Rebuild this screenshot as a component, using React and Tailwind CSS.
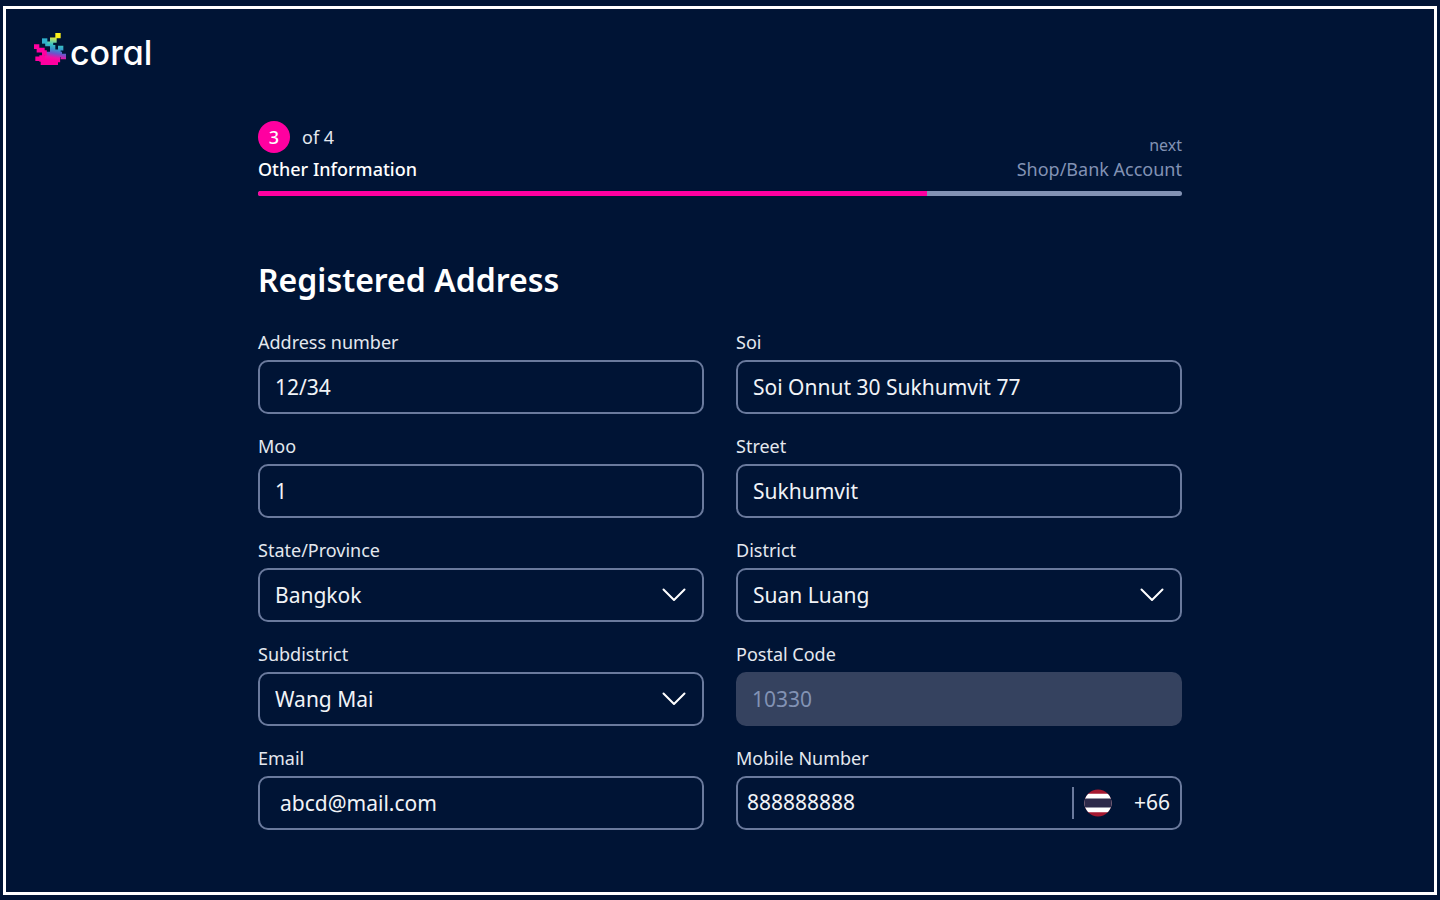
import { useState } from 'react';

const inputClass =
  'h-[54px] w-full rounded-[10px] border-2 border-[#6a7a9d] bg-transparent text-[21px] text-[#f1f3f7] outline-none focus:border-white';

function Logo() {
  return (
    <a href="#" className="inline-flex items-center gap-1 text-white">
      <svg className="h-8 w-8" viewBox="0 0 12 12">
        <defs>
          <linearGradient id="reef" gradientUnits="userSpaceOnUse" x1="8" y1="0" x2="6" y2="12">
            <stop offset="0.12" stopColor="#fdf018" />
            <stop offset="0.24" stopColor="#8fd88a" />
            <stop offset="0.36" stopColor="#38c2c4" />
            <stop offset="0.5" stopColor="#3592cc" />
            <stop offset="0.62" stopColor="#6a55cc" />
            <stop offset="0.76" stopColor="#f010a6" />
            <stop offset="0.85" stopColor="#ff00a0" />
          </linearGradient>
        </defs>
        {/* branches, top to bottom */}
        <path
          fill="url(#reef)"
          d="M8 0h2v2h-2zM6 1.700h2.500v2h-2.500zM4.200 3.200h3v1.800h-3zM6 4.500h2v3h-2zM9 4.800h2v1.800h-2zM7 6.200h3v2h-3zM4 7h6.500v2h-6.500zM10 7.800h2v2h-2zM3 8.500h6.800v2.500h-6.800zM2.500 10.200h6.500v1.800h-6.500z"
        />
        <path fill="#2fb0cc" d="M3 2h2v2h-2z" />
        <path fill="#ff00a0" d="M0 4.200h2v1.800h-2zM1 5.500h3v1.800h-3zM3 6.500h1.800v2h-1.800zM0.500 8.800h2v1.700h-2zM2 8.300h2v2.500h-2z" />
      </svg>
      <span className="pt-2 font-['Inter',sans-serif] text-[34px] leading-8 font-medium [font-feature-settings:'cv11']">
        coral
      </span>
    </a>
  );
}

function Field({ id, label, children }) {
  return (
    <div>
      <label htmlFor={id} className="block pb-1 text-lg leading-7 text-[#e4e8ef]">
        {label}
      </label>
      {children}
    </div>
  );
}

function TextField({ id, label, value, pad = 'px-[15px]', ...rest }) {
  const [text, setText] = useState(value);
  return (
    <Field id={id} label={label}>
      <input id={id} value={text} onChange={(e) => setText(e.target.value)} className={`${inputClass} ${pad}`} {...rest} />
    </Field>
  );
}

function SelectField({ id, label, options }) {
  return (
    <Field id={id} label={label}>
      <div className="relative">
        <select id={id} className={`${inputClass} appearance-none px-[15px] pt-0.5`}>
          {options.map((option) => (
            <option key={option} className="bg-[#001435]">{option}</option>
          ))}
        </select>
        <svg className="pointer-events-none absolute top-5 right-[18px] h-[14px] w-6" fill="none" stroke="white" viewBox="0 0 24 14">
          <path strokeLinecap="round" strokeLinejoin="round" strokeWidth={2} d="M1.5 1.5L12 12L22.5 1.5" />
        </svg>
      </div>
    </Field>
  );
}

export default function App() {
  return (
    <div className="flex min-h-screen bg-[#001435] px-[3px] pt-1.5 pb-[5px] font-['Noto_Sans',sans-serif]">
      <div className="flex-1 border-3 border-white">
        <header className="h-16 px-7 pt-5">
          <Logo />
        </header>
        <main className="mx-auto max-w-[924px] pt-12">
          <div className="flex items-end justify-between">
            <div>
              <div className="flex items-center gap-3 text-lg text-[#e4e8ef]">
                <span className="flex size-8 items-center justify-center rounded-full bg-[#ff00a0] font-medium text-white">3</span>
                of 4
              </div>
              <p className="text-lg leading-8 font-medium text-white">Other Information</p>
            </div>
            <div className="text-right text-[#8292b4]">
              <p className="text-base leading-4">next</p>
              <p className="text-lg leading-8">Shop/Bank Account</p>
            </div>
          </div>
          <div className="mt-1.5 h-[5px] overflow-hidden rounded-sm bg-[#8292b4]">
            <div className="h-full w-[72.4%] bg-[#ff00a0]" />
          </div>
          <h1 className="pt-[60px] text-[32px] leading-[48px] font-semibold text-white">Registered Address</h1>
          <form className="mt-6 grid grid-cols-2 gap-x-8 gap-y-[18px]">
            <TextField id="address" label="Address number" value="12/34" />
            <TextField id="soi" label="Soi" value="Soi Onnut 30 Sukhumvit 77" />
            <TextField id="moo" label="Moo" value="1" />
            <TextField id="street" label="Street" value="Sukhumvit" />
            <SelectField id="state" label="State/Province" options={['Bangkok']} />
            <SelectField id="district" label="District" options={['Suan Luang']} />
            <SelectField id="subdistrict" label="Subdistrict" options={['Wang Mai']} />
            <Field id="postal" label="Postal Code">
              <input id="postal" defaultValue="10330" disabled className="h-[54px] w-full rounded-[10px] bg-[#35425f] px-4 text-[21px] text-[#8292b4]" />
            </Field>
            <TextField id="email" label="Email" value="abcd@mail.com" pad="px-5" type="email" />
            <Field id="mobile" label="Mobile Number">
              <div className="flex h-[54px] items-center rounded-[10px] border-2 border-[#6a7a9d] pr-[10px] pl-[9px] text-[21px] text-[#f1f3f7]">
                <input id="mobile" type="tel" defaultValue="888888888" className="min-w-0 flex-1 bg-transparent outline-none" />
                <span className="mr-[10px] h-8 w-0.5 bg-[#6a7a9d]" />
                <svg className="size-7" viewBox="0 0 28 28">
                  <clipPath id="flag"><circle cx="14" cy="14" r="13.5" /></clipPath>
                  <g clipPath="url(#flag)">
                    <path fill="#a51931" d="M0 0h28v28H0z" />
                    <path fill="#fff" d="M0 4.7h28v18.6H0z" />
                    <path fill="#2d2a4a" d="M0 9.4h28v9.2H0z" />
                  </g>
                </svg>
                <span className="ml-[22px]">+66</span>
              </div>
            </Field>
          </form>
        </main>
      </div>
    </div>
  );
}
